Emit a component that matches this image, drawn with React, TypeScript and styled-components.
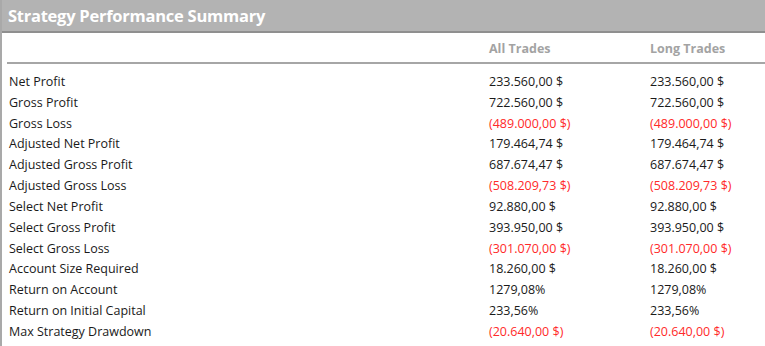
import React from 'react';
import styled, { createGlobalStyle } from 'styled-components';

const GlobalStyle = createGlobalStyle`
  html, body {
    margin: 0;
    padding: 0;
    background: #ffffff;
  }
  body {
    font-family: 'Open Sans', 'Noto Sans', sans-serif;
  }
`;

const Panel = styled.section`
  width: 765px;
  height: 346px;
  box-sizing: border-box;
  border-left: 2px solid #a9a9a9;
  background: #ffffff;
  overflow: hidden;
`;

const TitleBar = styled.header`
  height: 31px;
  background: #b3b3b3;
  border-bottom: 2px solid #8f8f8f;
  display: flex;
  align-items: center;
  padding-left: 6px;
  color: #ffffff;
  font-weight: 700;
  font-size: 16.5px;
  letter-spacing: -0.25px;
`;

const Table = styled.div`
  margin-left: 5px;
`;

const ColumnHeads = styled.div`
  display: grid;
  grid-template-columns: 482px 161px 1fr;
  height: 27px;
  align-items: center;
  padding-top: 2px;
  border-bottom: 2px solid #a6a6a6;
  color: #a3a3a3;
  font-weight: 700;
  font-size: 12.5px;
`;

const Rows = styled.div`
  padding-top: 7px;
  padding-left: 2px;
`;

const Row = styled.div`
  display: grid;
  grid-template-columns: 480px 161px 1fr;
  height: 20.83px;
  align-items: center;
  font-size: 12.5px;
  color: #1a1a1a;
`;

const Value = styled.span<{ $negative?: boolean }>`
  color: ${(p) => (p.$negative ? '#ff2a2a' : '#1a1a1a')};
`;

type Metric = {
  label: string;
  all: string;
  long: string;
  negative?: boolean;
};

const metrics: Metric[] = [
  { label: 'Net Profit', all: '233.560,00 $', long: '233.560,00 $' },
  { label: 'Gross Profit', all: '722.560,00 $', long: '722.560,00 $' },
  { label: 'Gross Loss', all: '(489.000,00 $)', long: '(489.000,00 $)', negative: true },
  { label: 'Adjusted Net Profit', all: '179.464,74 $', long: '179.464,74 $' },
  { label: 'Adjusted Gross Profit', all: '687.674,47 $', long: '687.674,47 $' },
  { label: 'Adjusted Gross Loss', all: '(508.209,73 $)', long: '(508.209,73 $)', negative: true },
  { label: 'Select Net Profit', all: '92.880,00 $', long: '92.880,00 $' },
  { label: 'Select Gross Profit', all: '393.950,00 $', long: '393.950,00 $' },
  { label: 'Select Gross Loss', all: '(301.070,00 $)', long: '(301.070,00 $)', negative: true },
  { label: 'Account Size Required', all: '18.260,00 $', long: '18.260,00 $' },
  { label: 'Return on Account', all: '1279,08%', long: '1279,08%' },
  { label: 'Return on Initial Capital', all: '233,56%', long: '233,56%' },
  { label: 'Max Strategy Drawdown', all: '(20.640,00 $)', long: '(20.640,00 $)', negative: true },
];

const App: React.FC = () => {
  return (
    <>
      <GlobalStyle />
      <Panel>
        <TitleBar>Strategy Performance Summary</TitleBar>
        <Table>
          <ColumnHeads>
            <span />
            <span>All Trades</span>
            <span>Long Trades</span>
          </ColumnHeads>
          <Rows>
            {metrics.map((m) => (
              <Row key={m.label}>
                <span>{m.label}</span>
                <Value $negative={m.negative}>{m.all}</Value>
                <Value $negative={m.negative}>{m.long}</Value>
              </Row>
            ))}
          </Rows>
        </Table>
      </Panel>
    </>
  );
};

export default App;
